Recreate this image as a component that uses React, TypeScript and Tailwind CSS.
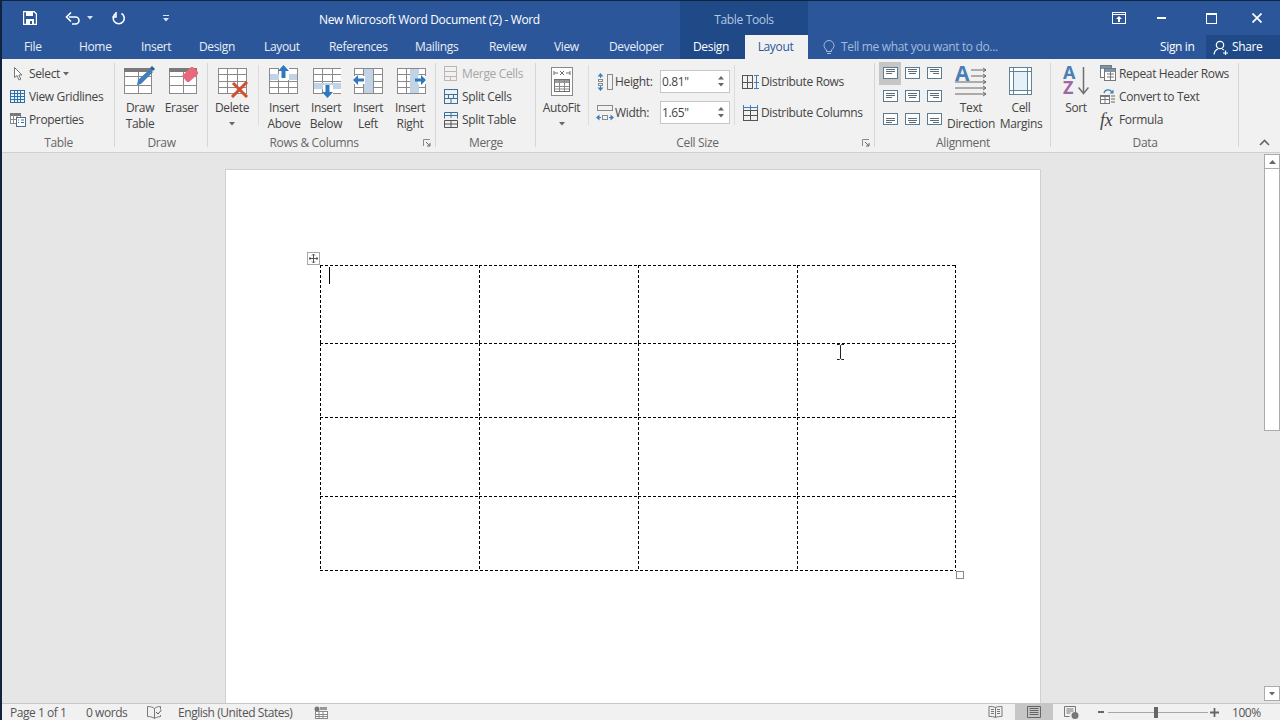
import type { ReactNode } from 'react';

const GRAY = '#8a8a8a';
const BLUE = '#3f7fbf';
const BAND = '#c3d3e6';

function Svg({ w, h, children }: { w: number; h: number; children: ReactNode }) {
    return (
        <svg width={w} height={h} viewBox={`0 0 ${w} ${h}`} fill="none" className="block">
            {children}
        </svg>
    );
}

// plain table used by the big ribbon icons
function TableGrid({ x = 0, y = 3, w = 28, h = 25, rows = 4, cols = 3, color = GRAY }: { x?: number; y?: number; w?: number; h?: number; rows?: number; cols?: number; color?: string }) {
    const lines = [];
    for (let i = 1; i < rows; i++) {
        const ly = Math.round(y + (h * i) / rows) + 0.5;
        lines.push(<path key={`r${i}`} d={`M${x} ${ly}H${x + w}`} />);
    }
    for (let i = 1; i < cols; i++) {
        const lx = Math.round(x + (w * i) / cols) + 0.5;
        lines.push(<path key={`c${i}`} d={`M${lx} ${y}V${y + h}`} />);
    }
    return (
        <g stroke={color} strokeWidth="1">
            <rect x={x + 0.5} y={y + 0.5} width={w} height={h} fill="#fff" />
            {lines}
        </g>
    );
}

function DrawTableIcon() {
    return (
        <Svg w={34} h={32}>
            <TableGrid x={1} w={27} rows={3} cols={2} />
            <rect x="1" y="3" width="28" height="4" fill="#7a7a7a" />
            <path d="M15 15L27 4l3 3-12 12-4 1z" fill={BLUE} />
            <path d="M27 3l2-2 3 3-2 2z" fill="#2d5f94" />
        </Svg>
    );
}

function EraserIcon() {
    return (
        <Svg w={32} h={32}>
            <TableGrid x={3} w={27} rows={3} cols={2} />
            <rect x="3" y="3" width="28" height="4" fill="#7a7a7a" />
            <path d="M16 11l9-9h2l5 5v2l-9 8h-2z" fill="#e9687c" />
        </Svg>
    );
}

function DeleteIcon() {
    return (
        <Svg w={34} h={33}>
            <TableGrid x={3} />
            <path d="M18 18l14 14M32 17L17 32" stroke="#cf4f2e" strokeWidth="3" />
        </Svg>
    );
}

function InsertAboveIcon() {
    return (
        <Svg w={30} h={32}>
            <TableGrid />
            <rect x="1" y="9" width="27" height="6" fill={BAND} />
            <rect x="10" y="3" width="10" height="12" fill="#fff" />
            <path d="M14.500 0L9 6h3.500v7h4V6H20z" fill="#2f78bd" />
        </Svg>
    );
}

function InsertBelowIcon() {
    return (
        <Svg w={30} h={33}>
            <TableGrid x={2} />
            <rect x="3" y="18" width="27" height="6" fill={BAND} />
            <rect x="12" y="20" width="10" height="9" fill="#fff" />
            <path d="M16.500 33L11 27h3.500v-7h4v7H22z" fill="#2f78bd" />
        </Svg>
    );
}

function InsertLeftIcon() {
    return (
        <Svg w={30} h={32}>
            <TableGrid x={1} />
            <rect x="11" y="4" width="9" height="24" fill={BAND} />
            <rect x="1" y="11" width="11" height="8" fill="#fff" />
            <path d="M0 15l5-5v3.500h6v3H5V20z" fill="#2f78bd" />
        </Svg>
    );
}

function InsertRightIcon() {
    return (
        <Svg w={32} h={32}>
            <TableGrid x={3} />
            <rect x="16" y="4" width="9" height="24" fill={BAND} />
            <rect x="24" y="11" width="8" height="8" fill="#fff" />
            <path d="M32 15l-5-5v3.500h-6v3h6V20z" fill="#2f78bd" />
        </Svg>
    );
}

function AutoFitIcon() {
    return (
        <div className="mt-[2px]">
            <Svg w={24} h={30}>
                <rect x="1.500" y="0.500" width="21" height="28" fill="#fff" stroke={GRAY} />
                <path d="M4 6h4M16 6h4M4 4v4M20 4v4M10 4l4 4M14 4l-4 4" stroke="#6f6f6f" />
                <rect x="4.500" y="12.500" width="15" height="12" fill="#fff" stroke="#6f6f6f" />
                <rect x="5" y="13" width="14" height="3" fill="#9a9a9a" />
                <path d="M4.500 19.500h15M4.500 22h15M9.500 13v11M14.500 13v11" stroke="#8a8a8a" />
            </Svg>
        </div>
    );
}

function HeightIcon() {
    return (
        <Svg w={18} h={18}>
            <path d="M4.500 1v4M4.500 13v4" stroke={BLUE} />
            <path d="M4.500 0L1.500 3.500h6zM4.500 18l-3-3.500h6z" fill={BLUE} />
            <rect x="2.500" y="6.500" width="4" height="2" stroke={GRAY} />
            <rect x="2.500" y="10.500" width="4" height="2" stroke={GRAY} />
            <rect x="11.500" y="1.500" width="5" height="15" stroke={GRAY} />
        </Svg>
    );
}

function WidthIcon() {
    return (
        <Svg w={18} h={18}>
            <rect x="1.500" y="1.500" width="15" height="5" stroke={GRAY} />
            <path d="M0 13.500l3.500-3v6zM18 13.500l-3.500-3v6z" fill={BLUE} />
            <path d="M3 13.500h2M13 13.500h2" stroke={BLUE} />
            <rect x="6.500" y="11.500" width="5" height="4" stroke={GRAY} />
        </Svg>
    );
}

function DistRowsIcon() {
    return (
        <Svg w={17} h={16}>
            <rect x="0.500" y="1.500" width="10" height="13" stroke="#555" />
            <path d="M0 8.500h10M5.500 1.500v13" stroke="#555" />
            <path d="M12 1.500h5M12 14.500h5M12 8.500h5M14.500 2v12" stroke={BLUE} />
        </Svg>
    );
}

function DistColsIcon() {
    return (
        <Svg w={17} h={16}>
            <rect x="1.500" y="5.500" width="14" height="10" stroke="#555" />
            <path d="M8.500 5.500v10M1.500 10.500h14" stroke="#555" />
            <path d="M1.500 0v5M8.500 0v5M15.500 0v5M1 2.500h15" stroke={BLUE} />
        </Svg>
    );
}

function SelectIcon() {
    return (
        <Svg w={14} h={16}>
            <path d="M4.500 1.500v10l2.500-2 2 4.500 1.800-.8-2-4.200h3.200z" fill="#fff" stroke="#777" />
        </Svg>
    );
}

function GridlinesIcon() {
    return (
        <Svg w={16} h={14}>
            <rect x="0.500" y="0.500" width="14" height="12" fill="#eaf2fb" stroke="#2f6fa8" />
            <path d="M0 3.500h15M0 6.500h15M0 9.500h15M4.500 0v13M7.500 0v13M10.500 0v13" stroke="#2f6fa8" />
        </Svg>
    );
}

function PropertiesIcon() {
    return (
        <Svg w={16} h={15}>
            <rect x="0.500" y="1.500" width="10" height="10" fill="#fff" stroke="#888" />
            <rect x="0" y="1" width="11" height="3" fill="#777" />
            <path d="M3.500 1v11M7 4v8M0 7.500h11" stroke="#888" />
            <rect x="6.500" y="5.500" width="9" height="9" fill="#fff" stroke="#4d6f8f" />
            <path d="M8 8h1M11 8h3M8 10.500h1M11 10.500h3" stroke="#4d6f8f" />
        </Svg>
    );
}

function MergeIcon() {
    return (
        <Svg w={14} h={16}>
            <rect x="0.500" y="0.500" width="12" height="14" stroke="#b9b9b9" />
            <path d="M0 5.500h13M0 10.500h13M6.500 11v4" stroke="#c9aeb0" />
        </Svg>
    );
}

function SplitCellsIcon() {
    return (
        <Svg w={15} h={16}>
            <rect x="0.500" y="0.500" width="13" height="14" stroke="#3b6f9e" />
            <path d="M0 5.500h14M0 9.500h14M4.500 5.500v4M9.500 5.500v4M7 10v5" stroke="#3b6f9e" />
        </Svg>
    );
}

function SplitTableIcon() {
    return (
        <Svg w={15} h={16}>
            <path d="M.5 6.500V.5h13v6M0 3.500h14M7 1v5" stroke="#3b6f9e" />
            <path d="M.5 8.500h13v7H.5zM0 12h14M7 9v6" stroke="#555" />
        </Svg>
    );
}

function AlignIcon({ y, x }: { y: number; x: 'l' | 'c' | 'r' }) {
    const pad = { l: [3, 9], c: [4, 11], r: [6, 12] }[x];
    return (
        <Svg w={15} h={12}>
            <rect x="0.500" y="0.500" width="14" height="11" fill="#fff" stroke="#5b7b93" />
            {[0, 2, 4].map((d, i) => (
                <path key={d} d={`M${i === 2 ? pad[0] : 3} ${y + d + 0.5}H${i === 2 ? pad[1] : 12}`} stroke="#5b6b78" />
            ))}
        </Svg>
    );
}

function TextDirectionIcon() {
    return (
        <div className="relative w-[32px] h-[32px]">
            <Svg w={32} h={32}>
                <path d="M16 5h15M16 11h15M0 17h31M0 23h31M0 29h31" stroke="#666" />
                <path d="M28 3l3 2-3 2M28 9l3 2-3 2M28 15l3 2-3 2M28 21l3 2-3 2M28 27l3 2-3 2" stroke="#666" />
            </Svg>
            <span className="absolute left-0 top-[-4px] text-[21px] leading-[24px] font-bold text-[#4a7fb5] tracking-normal">A</span>
        </div>
    );
}

function CellMarginsIcon() {
    return (
        <div className="mt-[2px]">
            <Svg w={24} h={29}>
                <rect x="0.500" y="0.500" width="22" height="27" fill="#fff" stroke="#5f8496" />
                <rect x="4" y="4" width="15" height="20" fill="#e4f1f9" />
                <path d="M0 4.500h23M0 23.500h23M4.500 0v28M18.500 0v28" stroke="#5f8496" />
            </Svg>
        </div>
    );
}

function SortIcon() {
    return (
        <div className="flex w-[26px]">
            <div className="w-[15px] flex flex-col text-[18px] font-bold leading-[15px] tracking-normal">
                <span className="text-[#4a7fb5]">A</span>
                <span className="text-[#a066a8]">Z</span>
            </div>
            <Svg w={11} h={30}>
                <path d="M5.500 2v26" stroke="#6f6f6f" strokeWidth="1.500" />
                <path d="M.5 22.500l5 6 5-6" stroke="#6f6f6f" strokeWidth="1.500" />
            </Svg>
        </div>
    );
}

function RepeatHeaderIcon() {
    return (
        <Svg w={17} h={17}>
            <rect x="0.500" y="0.500" width="11" height="12" fill="#fff" stroke="#777" />
            <rect x="1" y="1" width="10" height="3" fill="#7d96ad" />
            <rect x="4.500" y="3.500" width="11" height="12" fill="#fff" stroke="#777" />
            <rect x="5" y="4" width="10" height="3" fill="#7d96ad" />
            <path d="M7 9h7M7 12h7M10.500 7v8" stroke="#777" />
        </Svg>
    );
}

function ConvertTextIcon() {
    return (
        <Svg w={16} h={17}>
            <rect x="0.500" y="7.500" width="9" height="8" fill="#fff" stroke="#777" />
            <path d="M0 11.500h10M5 8v8" stroke="#777" />
            <rect x="0" y="7" width="10" height="2" fill="#777" />
            <path d="M11 8h4M11 11h4M11 14h4" stroke="#666" />
            <path d="M4 5c1-4 6-4 8-1" stroke={BLUE} strokeWidth="1.300" />
            <path d="M13.500 1.500v4h-4z" fill={BLUE} />
        </Svg>
    );
}

function Caret({ color = '#666' }: { color?: string }) {
    return <Svg w={6} h={4}><path d="M0 0h6L3 3.500z" fill={color} /></Svg>;
}

function Launcher() {
    return (
        <div className="w-[16px] flex items-center justify-start pl-[3px]">
            <Svg w={8} h={8}>
                <path d="M0.500 7V.5H7" stroke="#8a8a8a" />
                <path d="M3 3l4 4M7 4v3H4" stroke="#666" />
            </Svg>
        </div>
    );
}

function Large({ icon, lines, width, caret, className = '' }: { icon: ReactNode; lines: string[]; width: string; caret?: boolean; className?: string }) {
    return (
        <div className={`flex flex-col items-center ${width} ${className}`}>
            <div className="h-[38px] w-full flex items-start justify-center pt-[3px]">{icon}</div>
            {lines.map(l => (
                <div key={l} className="h-[16px] leading-[16px] whitespace-nowrap">{l}</div>
            ))}
            {caret && <div className="h-[16px] flex items-center"><Caret /></div>}
        </div>
    );
}

function Small({ icon, label, disabled, iconWidth = 'w-[19px]', children }: { icon: ReactNode; label: string; disabled?: boolean; iconWidth?: string; children?: ReactNode }) {
    return (
        <div className={`h-[23px] flex items-center whitespace-nowrap ${disabled ? 'text-[#a6a6a6]' : ''}`}>
            <div className={`${iconWidth} flex justify-start shrink-0`}>{icon}</div>
            <span>{label}</span>
            {children}
        </div>
    );
}

function Group({ label, width, launcher, children }: { label: string; width: string; launcher?: boolean; children: ReactNode }) {
    return (
        <div className={`relative h-full flex flex-col pt-[3px] shrink-0 ${width}`}>
            <div className="h-[73px] flex">{children}</div>
            <div className="h-[16px] flex text-[#666666] leading-[16px]">
                <div className="flex-1 text-center">{label}</div>
                {launcher && <Launcher />}
            </div>
            <div className="absolute right-0 top-[4px] bottom-[5px] w-px bg-[#d6d6d6]" />
        </div>
    );
}

function Sep({ className }: { className: string }) {
    return <div className={`w-px h-[60px] mt-[3px] bg-[#dcdcdc] shrink-0 ${className}`} />;
}

function Spinner({ value }: { value: string }) {
    return (
        <div className="w-[70px] h-[23px] bg-white border border-[#c6c6c6] flex items-center pl-[1px] text-[#444444]">
            <span className="flex-1">{value}</span>
            <div className="flex flex-col gap-[3px] pr-[5px]">
                <Svg w={6} h={4}><path d="M0 3.500h6L3 0z" fill="#666" /></Svg>
                <Caret />
            </div>
        </div>
    );
}

const tabs = [
    { label: 'File', w: 'w-[62px]', pad: 'pl-[22px]' },
    { label: 'Home', w: 'w-[63px]', pad: 'pl-[15px]' },
    { label: 'Insert', w: 'w-[58px]', pad: 'pl-[14px]' },
    { label: 'Design', w: 'w-[65px]', pad: 'pl-[14px]' },
    { label: 'Layout', w: 'w-[65px]', pad: 'pl-[14px]' },
    { label: 'References', w: 'w-[85px]', pad: 'pl-[14px]' },
    { label: 'Mailings', w: 'w-[74px]', pad: 'pl-[15px]' },
    { label: 'Review', w: 'w-[66px]', pad: 'pl-[15px]' },
    { label: 'View', w: 'w-[55px]', pad: 'pl-[14px]' },
    { label: 'Developer', w: 'w-[71px]', pad: 'pl-[14px]' },
];

const alignments: { y: number; x: 'l' | 'c' | 'r' }[] = [
    { y: 2, x: 'l' }, { y: 2, x: 'c' }, { y: 2, x: 'r' },
    { y: 3, x: 'l' }, { y: 3, x: 'c' }, { y: 3, x: 'r' },
    { y: 5, x: 'l' }, { y: 5, x: 'c' }, { y: 5, x: 'r' },
];

const rowHeights = ['h-[78px]', 'h-[74px]', 'h-[79px]', 'h-[75px]'];

export default function App() {
    return (
        <div className="relative w-[1280px] h-[720px] overflow-hidden flex flex-col bg-[#10233f] pl-[2px] pt-px font-['Open_Sans',sans-serif] text-[12px] text-[#444444] tracking-[-0.35px]">
            {/* title row */}
            <div className="h-[34px] flex bg-[#2b579a] text-white shrink-0">
                <div className="w-[678px] flex items-center shrink-0">
                    <div className="ml-[21px] w-[42px]">
                        <Svg w={14} h={14}>
                            <path d="M.5.500h10.500l2.500 2.500v10.500H.5z" stroke="#fff" strokeWidth="1.400" />
                            <rect x="3" y="1" width="7" height="4" fill="#fff" />
                            <rect x="3" y="8" width="8" height="5" fill="#fff" />
                            <rect x="7" y="10" width="2" height="3" fill="#2b579a" />
                        </Svg>
                    </div>
                    <div className="w-[22px]">
                        <Svg w={16} h={14}>
                            <path d="M4 6h6.500a3.500 3.500 0 0 1 0 7H7" stroke="#fff" strokeWidth="1.600" />
                            <path d="M6 1.500L1.500 6 6 10.500" stroke="#fff" strokeWidth="1.600" />
                        </Svg>
                    </div>
                    <div className="w-[25px]"><Caret color="#dbe5f3" /></div>
                    <div className="w-[51px]">
                        <Svg w={14} h={14}>
                            <path d="M9.500 2.500a5.500 5.500 0 1 1-5.500 0" stroke="#fff" strokeWidth="1.600" />
                            <path d="M4 1v5H.5" stroke="#fff" strokeWidth="1.500" />
                        </Svg>
                    </div>
                    <div className="w-[7px] flex flex-col gap-[2px]">
                        <div className="w-[6px] h-px bg-[#dbe5f3]" />
                        <Caret color="#dbe5f3" />
                    </div>
                    <div className="ml-[149px] pt-[4px] whitespace-nowrap leading-none">New Microsoft Word Document (2) - Word</div>
                </div>
                <div className="w-[128px] pt-[4px] bg-[#1f4a87] text-[#b4c7e2] flex items-center justify-center shrink-0">Table Tools</div>
                <div className="flex-1 flex items-center">
                    <div className="ml-[304px] w-[45px]">
                        <Svg w={14} h={12}>
                            <rect x="0.500" y="0.500" width="13" height="11" stroke="#fff" />
                            <path d="M0 2.500h14" stroke="#fff" />
                            <path d="M7 4l3 3H8v3H6V7H4z" fill="#fff" />
                        </Svg>
                    </div>
                    <div className="w-[49px]"><div className="w-[9px] h-[2px] bg-white" /></div>
                    <div className="w-[46px]">
                        <Svg w={11} h={11}>
                            <rect x="0.500" y="0.500" width="10" height="10" stroke="#fff" />
                            <rect x="0" y="0" width="11" height="2" fill="#fff" />
                        </Svg>
                    </div>
                    <Svg w={10} h={10}><path d="M.5.500l9 9M9.500.500l-9 9" stroke="#fff" strokeWidth="1.700" /></Svg>
                </div>
            </div>

            {/* tab row */}
            <div className="h-[24px] flex bg-[#2b579a] text-[#e8eef7] shrink-0">
                <div className="flex w-[678px] shrink-0">
                    {tabs.map(t => (
                        <div key={t.label} className={`${t.w} ${t.pad} leading-[24px] whitespace-nowrap`}>{t.label}</div>
                    ))}
                </div>
                <div className="w-[65px] pr-[3px] bg-[#1f4a87] text-white text-center leading-[24px] shrink-0">Design</div>
                <div className="w-[63px] pr-[2px] bg-[#f1f1f1] text-[#2b579a] text-center leading-[24px] shrink-0">Layout</div>
                <div className="flex-1 flex">
                    <div className="flex items-center pl-[15px] w-[352px] text-[#a3bbdc]">
                        <Svg w={12} h={15}>
                            <path d="M3.500 10C2 8.500 1 7.500 1 5.500a5 5 0 0 1 10 0c0 2-1 3-2.500 4.500v1.500h-5zM4 13.500h4" stroke="#a3bbdc" />
                        </Svg>
                        <span className="ml-[6px] whitespace-nowrap">Tell me what you want to do...</span>
                    </div>
                    <div className="w-[46px] leading-[24px] whitespace-nowrap text-white">Sign in</div>
                    <div className="flex-1 bg-[#1f4a87] flex items-center pl-[7px] text-white">
                        <Svg w={16} h={15}>
                            <circle cx="7" cy="5" r="3.700" stroke="#fff" strokeWidth="1.200" />
                            <path d="M1 14.500c.5-3.500 2.500-5 4-5.500M9 9c.6.200 1.200.5 1.700 1M10 13h5M12.500 10.500v5" stroke="#fff" strokeWidth="1.200" />
                        </Svg>
                        <span className="ml-[3px]">Share</span>
                    </div>
                </div>
            </div>

            {/* ribbon */}
            <div className="h-[94px] flex bg-[#f1f1f1] border-b border-[#d0d0d0] shrink-0">
                <Group label="Table" width="w-[113px]">
                    <div className="flex flex-col pl-[8px]">
                        <Small icon={<SelectIcon />} label="Select">
                            <span className="ml-[3px]"><Caret /></span>
                        </Small>
                        <Small icon={<GridlinesIcon />} label="View Gridlines" />
                        <Small icon={<PropertiesIcon />} label="Properties" />
                    </div>
                </Group>
                <Group label="Draw" width="w-[93px]">
                    <Large icon={<DrawTableIcon />} lines={['Draw', 'Table']} width="w-[40px]" className="ml-[5px]" />
                    <Large icon={<EraserIcon />} lines={['Eraser']} width="w-[41px]" className="ml-[1px]" />
                </Group>
                <Group label="Rows & Columns" width="w-[228px]" launcher>
                    <Large icon={<DeleteIcon />} lines={['Delete']} width="w-[40px]" caret className="ml-[4px]" />
                    <Sep className="ml-[6px]" />
                    <Large icon={<InsertAboveIcon />} lines={['Insert', 'Above']} width="w-[42px]" className="ml-[4px]" />
                    <Large icon={<InsertBelowIcon />} lines={['Insert', 'Below']} width="w-[42px]" />
                    <Large icon={<InsertLeftIcon />} lines={['Insert', 'Left']} width="w-[42px]" />
                    <Large icon={<InsertRightIcon />} lines={['Insert', 'Right']} width="w-[42px]" />
                </Group>
                <Group label="Merge" width="w-[100px]">
                    <div className="flex flex-col pl-[8px]">
                        <Small icon={<MergeIcon />} label="Merge Cells" disabled iconWidth="w-[18px]" />
                        <Small icon={<SplitCellsIcon />} label="Split Cells" iconWidth="w-[18px]" />
                        <Small icon={<SplitTableIcon />} label="Split Table" iconWidth="w-[18px]" />
                    </div>
                </Group>
                <Group label="Cell Size" width="w-[339px]" launcher>
                    <Large icon={<AutoFitIcon />} lines={['AutoFit']} width="w-[41px]" caret className="ml-[5px]" />
                    <Sep className="ml-[6px]" />
                    <div className="ml-[7px] pt-[8px] flex flex-col gap-[8px]">
                        <div className="flex items-center h-[23px]">
                            <div className="w-[19px]"><HeightIcon /></div>
                            <div className="w-[45px]">Height:</div>
                            <Spinner value={'0.81"'} />
                        </div>
                        <div className="flex items-center h-[23px]">
                            <div className="w-[19px]"><WidthIcon /></div>
                            <div className="w-[45px]">Width:</div>
                            <Spinner value={'1.65"'} />
                        </div>
                    </div>
                    <Sep className="ml-[4px]" />
                    <div className="ml-[7px] pt-[8px] flex flex-col gap-[8px]">
                        <div className="h-[23px] flex items-center whitespace-nowrap">
                            <div className="w-[19px]"><DistRowsIcon /></div>Distribute Rows
                        </div>
                        <div className="h-[23px] flex items-center whitespace-nowrap">
                            <div className="w-[19px]"><DistColsIcon /></div>Distribute Columns
                        </div>
                    </div>
                </Group>
                <Group label="Alignment" width="w-[176px]">
                    <div className="ml-[4px] w-[66px] h-[69px] grid grid-cols-3 grid-rows-3 shrink-0">
                        {alignments.map((a, i) => (
                            <div key={i} className={`flex items-center justify-center pb-[2px] ${i === 0 ? 'bg-[#c6c6c6]' : ''}`}>
                                <AlignIcon y={a.y} x={a.x} />
                            </div>
                        ))}
                    </div>
                    <Large icon={<TextDirectionIcon />} lines={['Text', 'Direction']} width="w-[48px]" className="ml-[2px]" />
                    <Large icon={<CellMarginsIcon />} lines={['Cell', 'Margins']} width="w-[46px]" className="ml-[3px]" />
                </Group>
                <Group label="Data" width="w-[188px]">
                    <Large icon={<SortIcon />} lines={['Sort']} width="w-[30px]" className="ml-[10px]" />
                    <div className="flex flex-col ml-[9px]">
                        <Small icon={<RepeatHeaderIcon />} label="Repeat Header Rows" />
                        <Small icon={<ConvertTextIcon />} label="Convert to Text" />
                        <Small icon={<span className="font-['Liberation_Serif',serif] italic text-[18px] leading-none text-[#444444]">fx</span>} label="Formula" />
                    </div>
                </Group>
                <div className="flex-1 flex justify-end items-end pr-[10px] pb-[6px]">
                    <Svg w={11} h={7}><path d="M1 6l4.500-4.500L10 6" stroke="#666" strokeWidth="1.600" /></Svg>
                </div>
            </div>

            {/* document area */}
            <div className="flex-1 min-h-0 flex bg-[#e6e6e6]">
                <div className="flex-1 min-w-0 overflow-hidden pl-[223px] pt-[16px]">
                    <div className="relative w-[816px] h-[560px] bg-white border border-[#d0d0d0] pl-[94px] pt-[95px]">
                        {/* right and bottom table edge, the cells draw their own top and left */}
                        <div className="w-[636px] bg-[image:repeating-linear-gradient(90deg,#000_0_3px,transparent_3px_5px),repeating-linear-gradient(180deg,#000_0_3px,transparent_3px_5px)] bg-[length:100%_1px,1px_100%] bg-[position:0_100%,100%_0] bg-no-repeat">
                            {rowHeights.map((h, r) => (
                                <div key={r} className={`flex ${h}`}>
                                    {['w-[159px]', 'w-[159px]', 'w-[159px]', 'w-[159px]'].map((w, c) => (
                                        <div key={c} className={`${w} bg-[image:repeating-linear-gradient(90deg,#000_0_3px,transparent_3px_5px),repeating-linear-gradient(180deg,#000_0_3px,transparent_3px_5px)] bg-[length:100%_1px,1px_100%] bg-no-repeat`} />
                                    ))}
                                </div>
                            ))}
                        </div>
                        <div className="absolute left-[103px] top-[97px] w-px h-[17px] bg-black" />
                        <div className="absolute left-[81px] top-[82px] w-[13px] h-[13px] bg-white border border-[#a6a6a6] flex items-center justify-center">
                            <Svg w={9} h={9}>
                                <path d="M4.500 0v9M0 4.500h9M3 1.500L4.500 0 6 1.500M3 7.500L4.500 9 6 7.500M1.500 3L0 4.500 1.500 6M7.500 3L9 4.500 7.500 6" stroke="#555" />
                            </Svg>
                        </div>
                        <div className="absolute left-[730px] top-[401px] w-[8px] h-[8px] bg-white border border-[#8a8a8a]" />
                        <div className="absolute left-[611px] top-[174px]">
                            <Svg w={7} h={16}>
                                <path d="M0 .5h2.500L3.500 1.500 4.500.5H7M3.500 1.500v13M0 15.500h2.500l1-1 1 1H7" stroke="#222" />
                            </Svg>
                        </div>
                    </div>
                </div>
                {/* scrollbar */}
                <div className="w-[16px] flex flex-col items-stretch pt-[1px] pb-[2px]">
                    <div className="h-[15px] bg-white border border-[#ababab] flex items-center justify-center">
                        <Svg w={7} h={4}><path d="M0 4h7L3.500 0z" fill="#666" /></Svg>
                    </div>
                    <div className="h-[262px] bg-white border border-t-0 border-[#ababab]" />
                    <div className="flex-1" />
                    <div className="h-[15px] bg-white border border-[#ababab] flex items-center justify-center">
                        <Caret />
                    </div>
                </div>
            </div>

            {/* status bar */}
            <div className="h-[17px] flex items-center bg-[#f1f1f1] border-t border-[#c6c6c6] text-[#555555] tracking-[-0.45px] shrink-0">
                <div className="w-[76px] pl-[8px] pt-[2px] whitespace-nowrap">Page 1 of 1</div>
                <div className="w-[69px] pl-[8px] pt-[2px] whitespace-nowrap">0 words</div>
                <div className="w-[31px]">
                    <Svg w={15} h={13}>
                        <path d="M7.500 2.500C6 1 3 .5.500.5v10c2.500 0 5 .5 7 2V2.500zM7.500 2.500c1-1 3-2 6-2v3M7.500 12.500c1-1 3-1.500 6-2V9" stroke="#777" />
                        <path d="M9 6l2 2 3.500-4" stroke="#555" />
                    </Svg>
                </div>
                <div className="w-[136px] pt-[2px] whitespace-nowrap">English (United States)</div>
                <Svg w={14} h={13}>
                    <circle cx="3" cy="3" r="2.500" fill="#777" />
                    <path d="M6 1h7v3H6z" fill="#999" />
                    <rect x="1.500" y="5.500" width="12" height="7" fill="#fff" stroke="#888" />
                    <path d="M1 8.500h13M1 10.500h13M5 6v7M9 6v7" stroke="#888" />
                </Svg>
                <div className="ml-[660px] w-[27px]">
                    <Svg w={15} h={12}>
                        <path d="M7.500 1.500c-2-1-4-1-6.500-1v10c2.500 0 4.500 0 6.500 1 2-1 4-1 6.500-1V.5c-2.500 0-4.500 0-6.500 1zM7.500 1.500v10M3 3.500h3M3 5.500h3M3 7.500h3M9 3.500h3M9 5.500h3M9 7.500h3" stroke="#777" />
                    </Svg>
                </div>
                <div className="w-[38px] h-full bg-[#c6c6c6] flex items-center justify-center">
                    <Svg w={14} h={12}>
                        <path d="M.5.500h13v11H.5zM2.500 2.500h9M2.500 4.500h9M2.500 6.500h9M2.500 8.500h9" stroke="#666" />
                    </Svg>
                </div>
                <div className="ml-[11px] w-[34px]">
                    <Svg w={15} h={13}>
                        <path d="M11.500 6V.5H.5v10h5M2.500 3h7M2.500 5h7M2.500 7h4" stroke="#777" />
                        <circle cx="11" cy="9.500" r="3.500" fill="#777" />
                    </Svg>
                </div>
                <div className="w-[6px] h-[2px] bg-[#666666]" />
                <div className="relative w-[100px] ml-[4px] h-px bg-[#a6a6a6]">
                    <div className="absolute left-[46px] -top-[5px] w-[4px] h-[11px] bg-[#666666]" />
                </div>
                <div className="ml-[2px] w-[22px]">
                    <Svg w={9} h={9}><path d="M4.500 0v9M0 4.500h9" stroke="#666" strokeWidth="1.800" /></Svg>
                </div>
                <div className="pt-[2px] whitespace-nowrap">100%</div>
            </div>
        </div>
    );
}
